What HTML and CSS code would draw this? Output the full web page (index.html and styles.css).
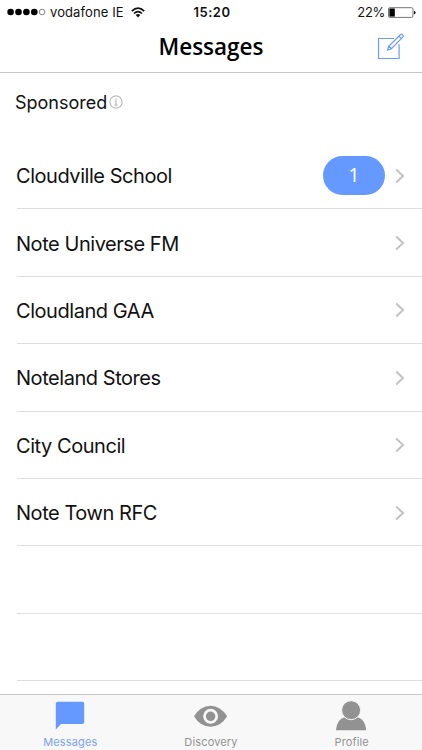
FILE: index.html
```html
<!DOCTYPE html>
<html lang="en">
<head>
  <meta charset="UTF-8">
  <meta name="viewport" content="width=device-width, initial-scale=1.0">
  <title>Messages</title>
  <link rel="stylesheet" href="styles.css">
</head>
<body>

  <!-- HEADER -->
  <header>
    <div class="status">
      <div class="carrier">
        <svg class="signal" width="39" height="8" viewBox="0 0 39 8">
          <circle cx="3.6" cy="4" r="3.3"/>
          <circle cx="11.5" cy="4" r="3.3"/>
          <circle cx="19.4" cy="4" r="3.3"/>
          <circle cx="27.3" cy="4" r="3.3"/>
          <circle class="empty" cx="35.1" cy="4" r="2.8"/>
        </svg>
        <span class="carrier-name">vodafone IE</span>
        <svg class="wifi" width="14" height="11" viewBox="0 0 14 11">
          <path d="M.8 4.1Q7-1.9 13.2 4.1M3 6.5Q7 2.6 11 6.5"/>
          <path class="dot" d="M4.7 8.1Q7 6 9.3 8.1L7 10.5Z"/>
        </svg>
      </div>
      <span class="time">15:20</span>
      <div class="power">
        <span>22%</span>
        <svg width="28" height="11" viewBox="0 0 28 11">
          <rect x=".5" y=".7" width="24.5" height="9.7" rx="1.3" fill="#fff" stroke="#777"/>
          <rect x="1.4" y="1.5" width="5.4" height="8.1" fill="#000"/>
          <path d="M26 3.8q1.6.4 1.6 1.8T26 7.4z" fill="#111"/>
        </svg>
      </div>
    </div>
    <div class="title-bar">
      <h1>Messages</h1>
      <svg class="compose" width="28" height="28" viewBox="0 0 28 28">
        <path d="M17 5.5H1.5v20h20.6V11.2"/>
        <path d="M10.6 17.1l1.1-3.8L23.6 1.5q.8-.7 1.6 0l.8.8q.8.8 0 1.6L14.4 15.7zM21.9 3.2l2.4 2.4M11.9 13.3l2.5 2.4"/>
      </svg>
    </div>
  </header>

  <!-- MESSAGE LIST -->
  <main>
    <div class="section-title">
      <h2>Sponsored</h2>
      <svg width="14" height="14" viewBox="0 0 14 14">
        <circle cx="7" cy="7" r="6.1"/>
        <path d="M7 3.2v1.5M5.8 6.1H7v4M5.4 10.2h3.2"/>
      </svg>
    </div>
    <ul class="list">
      <li>
        <span class="name">Cloudville School</span>
        <span class="badge">1</span>
        <svg class="chevron" width="10" height="16" viewBox="0 0 10 16"><path d="M1.2 1.5L8 8l-6.8 6.5"/></svg>
      </li>
      <li>
        <span class="name">Note Universe FM</span>
        <svg class="chevron" width="10" height="16" viewBox="0 0 10 16"><path d="M1.2 1.5L8 8l-6.8 6.5"/></svg>
      </li>
      <li>
        <span class="name">Cloudland GAA</span>
        <svg class="chevron" width="10" height="16" viewBox="0 0 10 16"><path d="M1.2 1.5L8 8l-6.8 6.5"/></svg>
      </li>
      <li>
        <span class="name">Noteland Stores</span>
        <svg class="chevron" width="10" height="16" viewBox="0 0 10 16"><path d="M1.2 1.5L8 8l-6.8 6.5"/></svg>
      </li>
      <li>
        <span class="name">City Council</span>
        <svg class="chevron" width="10" height="16" viewBox="0 0 10 16"><path d="M1.2 1.5L8 8l-6.8 6.5"/></svg>
      </li>
      <li>
        <span class="name">Note Town RFC</span>
        <svg class="chevron" width="10" height="16" viewBox="0 0 10 16"><path d="M1.2 1.5L8 8l-6.8 6.5"/></svg>
      </li>
      <li></li>
      <li></li>
    </ul>
  </main>

  <!-- TAB BAR -->
  <nav>
    <a class="tab active" href="#">
      <svg width="34" height="32" viewBox="0 0 34 32">
        <path d="M4.8 2.8h24.6q1.8 0 1.8 1.8v18.6q0 1.8-1.8 1.8H8L2.8 30.4V4.6q0-1.8 2-1.8z"/>
      </svg>
      <span>Messages</span>
    </a>
    <a class="tab" href="#">
      <svg width="34" height="32" viewBox="0 0 34 32">
        <path d="M0 17.3Q6.5 6.8 16.5 6.8t16.6 10.5Q26.8 27.8 16.5 27.8T0 17.3z"/>
        <circle cx="16.6" cy="17.3" r="6.1" fill="none" stroke="#f8f8f8" stroke-width="2.7"/>
      </svg>
      <span>Discovery</span>
    </a>
    <a class="tab" href="#">
      <svg width="34" height="32" viewBox="0 0 34 32">
        <path d="M.9 31.2Q2.1 19.9 9.6 18.3q6.5 4.4 13 0Q30.1 19.9 31.3 31.2z"/>
        <circle cx="16.1" cy="11.2" r="9.5" stroke="#f8f8f8" stroke-width="1"/>
      </svg>
      <span>Profile</span>
    </a>
  </nav>

</body>
</html>
```

FILE: styles.css
```css
/* === GENERAL === */
* { margin: 0; padding: 0; box-sizing: border-box; }
body {
  height: 750px; display: flex; flex-direction: column; overflow: hidden;
  background-color: #fff; color: #111; font-family: Inter, "Liberation Sans", sans-serif;
}
a { text-decoration: none; }
svg { display: block; flex: none; }

/* === HEADER === */
header { height: 73px; flex: none; border-bottom: 1px solid #c8c8c8; }
.status {
  height: 24px; padding: 0 6px 0 7px; display: grid; grid-template-columns: 1fr auto 1fr;
  align-items: center; font-size: 13px; line-height: 24px;
}
.carrier { display: flex; align-items: center; }
.carrier-name { margin-left: 4px; letter-spacing: 0.1px; }
.signal .empty { fill: none; stroke: #777; stroke-width: 0.9; }
.wifi { margin-left: 7px; fill: none; stroke: #111; stroke-width: 1.7; }
.wifi .dot { fill: #111; stroke: none; }
.time { padding-left: 1px; font-weight: 600; letter-spacing: 0.5px; }
.power { display: flex; align-items: center; justify-content: flex-end; gap: 3px; letter-spacing: -0.3px; }
.title-bar {
  height: 46px; padding: 0 17px; display: grid; grid-template-columns: 1fr auto 1fr; align-items: center;
}
h1 {
  grid-column: 2; font-family: "Open Sans", "Noto Sans", sans-serif;
  font-size: 22.5px; font-weight: 600; line-height: 44px; color: #000;
}
.compose { justify-self: end; fill: none; stroke: #6d9bf8; stroke-width: 1.2; }

/* === LIST === */
main { flex: 1; min-height: 0; overflow: hidden; }
.section-title { height: 69px; padding: 0 15px; display: flex; gap: 2px; line-height: 60px; }
.section-title h2 { font-size: 18px; font-weight: 400; letter-spacing: 0; }
.section-title svg { margin-top: 22px; fill: none; stroke: #bbb; stroke-width: 1.2; }
.list { list-style: none; margin-left: 17px; }
.list li {
  height: 67.4px; padding: 1px 17px 0 0; display: flex; align-items: center;
  border-bottom: 1px solid #dedede;
}
.name { flex: 1; margin-left: -1px; padding-top: 1px; font-size: 20px; letter-spacing: -0.45px; }
.badge {
  width: 62px; height: 39px; margin-right: 10px; border-radius: 20px;
  background-color: #6699ff; color: #fff; font-family: "Noto Sans", sans-serif;
  font-size: 19px; line-height: 39px; text-align: center;
}
.chevron { fill: none; stroke: #c3c3c7; stroke-width: 2; }

/* === TAB BAR === */
nav {
  height: 56px; flex: none; display: flex;
  background-color: #f8f8f8; border-top: 1px solid #c8c8c8;
}
.tab {
  flex: 1; padding-top: 4px; display: flex; flex-direction: column; align-items: center;
  color: #929292; fill: #929292; font-size: 11px; line-height: 22px; letter-spacing: 0.15px;
}
.tab.active { color: #7ba2f2; fill: #6699ff; }
```
